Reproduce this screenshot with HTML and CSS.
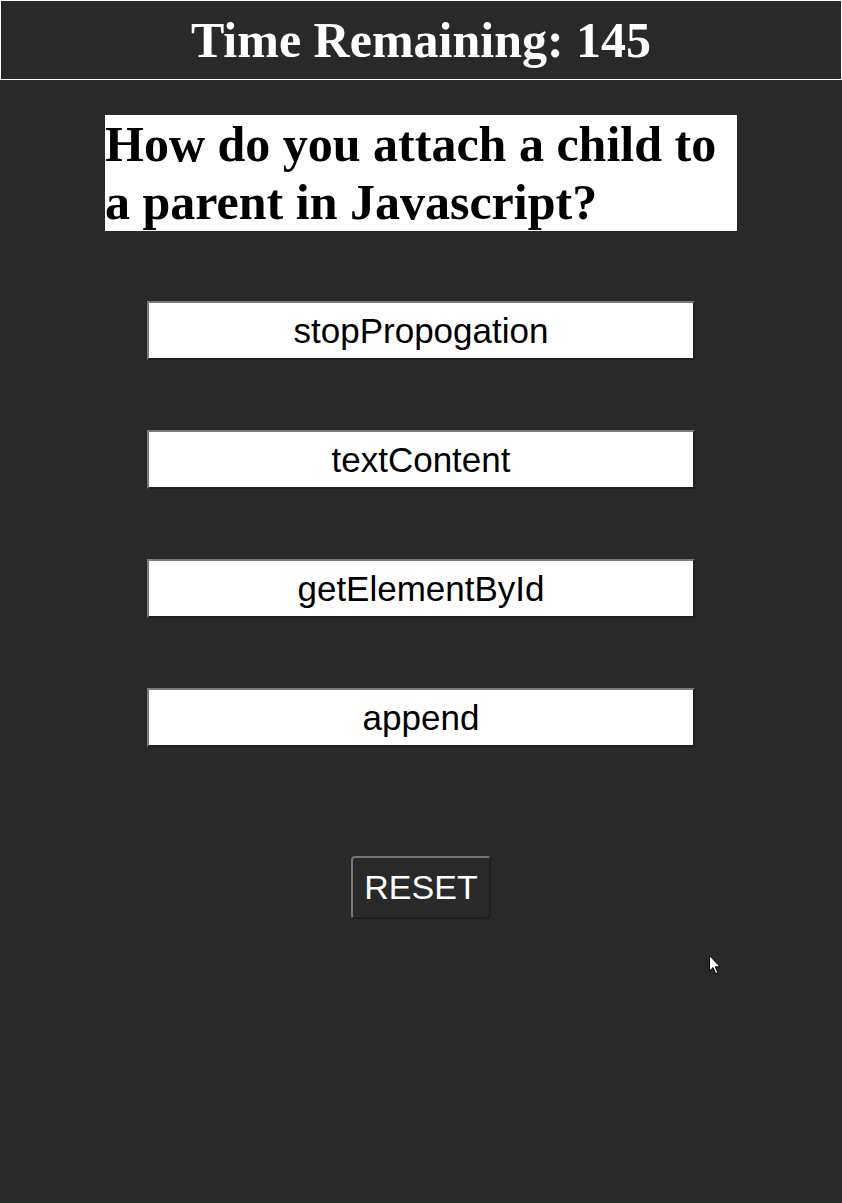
FILE: index.html
```html
<!DOCTYPE html>
<html lang="en">
<head>
<meta charset="utf-8">
<title>Quiz</title>
<link rel="stylesheet" href="styles.css">
</head>
<body>
<header class="timer-bar">
  <h1 class="timer">Time Remaining: 145</h1>
</header>
<main class="quiz">
  <h2 class="question">How do you attach a child to a parent in Javascript?</h2>
  <div class="answers">
    <button class="answer">stopPropogation</button>
    <button class="answer">textContent</button>
    <button class="answer">getElementById</button>
    <button class="answer">append</button>
  </div>
  <button class="reset">RESET</button>
</main>
<svg class="cursor" width="13" height="20" viewBox="0 0 13 20" aria-hidden="true">
  <path d="M0.5 0.5 L0.5 16 L4 12.6 L6.6 18.6 L8.8 17.6 L6.3 11.8 L11 11.8 Z" fill="#fff" stroke="#000" stroke-width="1"/>
</svg>
</body>
</html>
```
FILE: styles.css
```css
html, body {
  margin: 0;
  padding: 0;
  background: #292929;
  min-height: 100%;
}
body {
  position: relative;
  min-height: 1203px;
  font-family: "Liberation Serif", "Times New Roman", serif;
}
.timer-bar {
  border: 1px solid #ffffff;
  text-align: center;
}
.timer {
  margin: 0;
  padding: 10px 0;
  font-size: 50px;
  font-weight: bold;
  color: #ffffff;
  line-height: normal;
}
.quiz {
  display: flex;
  flex-direction: column;
  align-items: center;
}
.question {
  box-sizing: border-box;
  width: 632px;
  margin: 35px 0 0 0;
  background: #ffffff;
  color: #000000;
  font-size: 50px;
  font-weight: bold;
  line-height: normal;
  text-align: left;
}
.answers {
  display: flex;
  flex-direction: column;
  gap: 70px;
  margin-top: 70px;
  width: 548px;
}
.answer {
  box-sizing: border-box;
  width: 100%;
  height: 59px;
  padding: 0;
  background: #ffffff;
  color: #000000;
  font-family: "Liberation Sans", Arial, sans-serif;
  font-size: 35px;
  border-style: solid;
  border-width: 2px;
  border-color: #7c7c7c #1f1f1f #1f1f1f #7c7c7c;
  border-radius: 0;
  cursor: pointer;
}
.reset {
  box-sizing: border-box;
  margin-top: 109px;
  width: 140px;
  height: 63px;
  padding: 0;
  background: #292929;
  color: #ffffff;
  font-family: "Liberation Sans", Arial, sans-serif;
  font-size: 34px;
  border-style: solid;
  border-width: 2px;
  border-color: #767676 #1f1f1f #1f1f1f #767676;
  border-radius: 4px;
}
.cursor {
  position: absolute;
  left: 709px;
  top: 955px;
}
```
